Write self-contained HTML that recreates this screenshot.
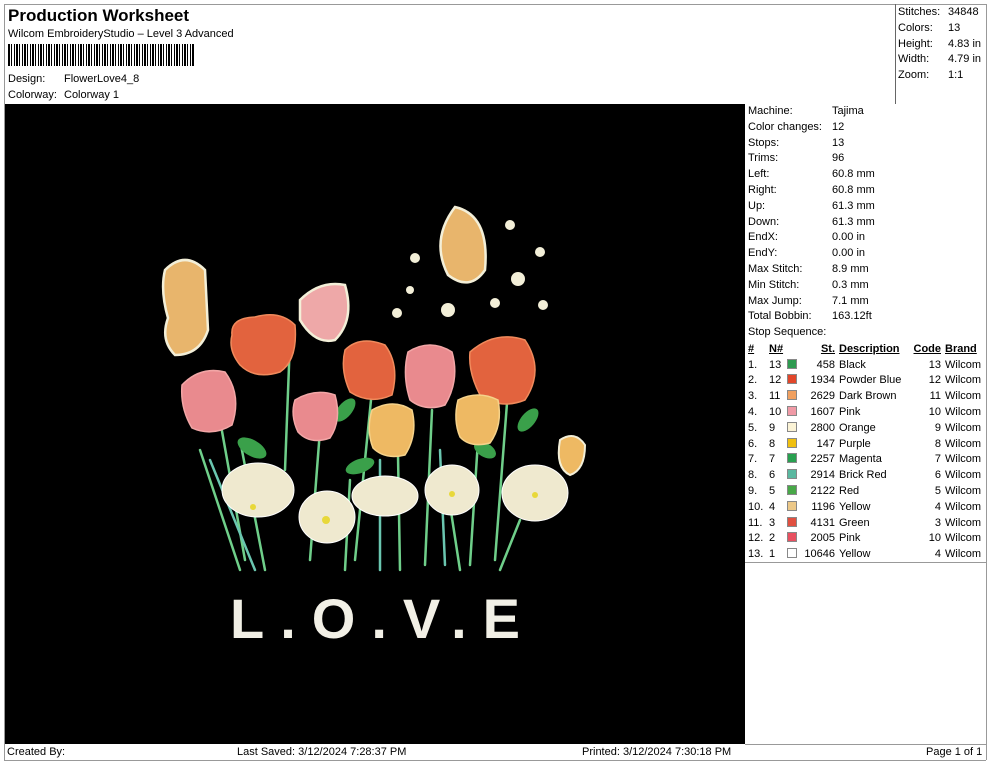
<!DOCTYPE html>
<html><head><meta charset="utf-8"><style>
*{margin:0;padding:0;box-sizing:border-box}
body{width:990px;height:762px;background:#fff;font-family:"Liberation Sans",Arial,sans-serif;color:#000;position:relative;overflow:hidden;font-size:11px}
.a{position:absolute;white-space:nowrap}
.line{position:absolute;background:#999}
table{border-collapse:collapse}
td{padding:0;height:15.8px;font-size:11px;white-space:nowrap}
.sw{display:inline-block;width:10px;height:10px;border:1px solid #888;vertical-align:-1px}
</style></head><body>
<div class="line" style="left:4px;top:4px;width:982px;height:1px"></div>
<div class="line" style="left:4px;top:4px;width:1px;height:756px"></div>
<div class="line" style="left:986px;top:4px;width:1px;height:756px"></div>
<div class="line" style="left:4px;top:760px;width:982px;height:1px"></div>
<div class="line" style="left:895px;top:4px;width:1px;height:100px;background:#666"></div>
<div class="line" style="left:745px;top:744px;width:241px;height:1px"></div>
<div class="line" style="left:745px;top:562px;width:241px;height:1px"></div>

<div class="a" style="left:8px;top:6px;font-size:17px;font-weight:bold">Production Worksheet</div>
<div class="a" style="left:8px;top:28px;font-size:11px">Wilcom EmbroideryStudio – Level 3 Advanced</div>
<div class="a" style="left:8px;top:44px;width:187px;height:22px;background:repeating-linear-gradient(90deg,#000 0 2px,#fff 2px 3px,#000 3px 4px,#fff 4px 6px,#000 6px 7px,#fff 7px 8px)"></div>
<div class="a" style="left:8px;top:73px">Design:</div><div class="a" style="left:64px;top:73px">FlowerLove4_8</div>
<div class="a" style="left:8px;top:89px">Colorway:</div><div class="a" style="left:64px;top:89px">Colorway 1</div>

<div class="a" style="left:898px;top:5px;line-height:15.8px">Stitches:<br>Colors:<br>Height:<br>Width:<br>Zoom:</div>
<div class="a" style="left:948px;top:5px;line-height:15.8px">34848<br>13<br>4.83 in<br>4.79 in<br>1:1</div>

<div class="a" style="left:5px;top:104px;width:740px;height:640px;background:#000">
<svg width="740" height="640" viewBox="5 104 740 640" style="position:absolute;left:0;top:0">
<g fill="none" stroke-width="2.5" stroke-linecap="round">
<path d="M220 420 L245 560 M240 440 L265 570 M200 450 L240 570 M290 340 L285 470 M320 430 L310 560 M372 390 L355 560 M398 455 L400 570 M432 410 L425 565 M478 440 L470 565 M508 390 L495 560 M350 480 L345 570 M450 505 L460 570 M520 520 L500 570" stroke="#6fcf8a"/>
<path d="M210 460 L255 570 M380 460 L380 570 M440 450 L445 565" stroke="#6ac6b0"/>
</g>
<g fill="#3aa04a">
<ellipse cx="252" cy="448" rx="16" ry="8" transform="rotate(30 252 448)"/>
<ellipse cx="345" cy="410" rx="14" ry="7" transform="rotate(-50 345 410)"/>
<ellipse cx="360" cy="466" rx="15" ry="7" transform="rotate(-20 360 466)"/>
<ellipse cx="528" cy="420" rx="14" ry="7" transform="rotate(-50 528 420)"/>
<ellipse cx="485" cy="450" rx="12" ry="7" transform="rotate(30 485 450)"/>
</g>
<g stroke="#f3efd8" stroke-width="2.5">
<path d="M165 270 Q185 250 205 270 L208 330 Q200 355 175 355 Q160 340 168 318 Q160 290 165 270Z" fill="#e8b56c"/>
<path d="M300 300 Q320 280 345 285 Q355 320 335 340 Q315 345 300 320Z" fill="#eea8a8"/>
<path d="M455 207 Q490 215 485 270 Q470 292 448 275 Q430 240 455 207Z" fill="#e8b56c"/>
</g>
<g fill="#f3efd8">
<circle cx="415" cy="258" r="5"/><circle cx="510" cy="225" r="5"/><circle cx="540" cy="252" r="5"/><circle cx="518" cy="279" r="7"/><circle cx="410" cy="290" r="4"/><circle cx="448" cy="310" r="7"/><circle cx="495" cy="303" r="5"/><circle cx="543" cy="305" r="5"/><circle cx="397" cy="313" r="5"/>
</g>
<g fill="#e2633e" stroke="#f08a5c" stroke-width="1.5">
<path d="M232 335 Q230 318 255 317 Q280 310 295 325 Q298 360 280 372 Q255 380 240 365 Q228 350 232 335Z"/>
<path d="M345 350 Q360 335 385 345 Q400 365 392 395 Q370 405 350 392 Q340 370 345 350Z"/>
<path d="M470 352 Q495 330 525 340 Q545 370 525 400 Q500 410 480 395 Q468 372 470 352Z"/>
</g>
<g fill="#e98a8e" stroke="#f2a6a6" stroke-width="1.5">
<path d="M182 385 Q200 366 225 372 Q242 395 232 425 Q212 437 192 428 Q180 408 182 385Z"/>
<path d="M295 400 Q315 388 335 395 Q342 420 330 438 Q310 445 298 432 Q290 415 295 400Z"/>
<path d="M408 352 Q430 338 452 352 Q460 380 445 405 Q425 412 410 400 Q402 375 408 352Z"/>
</g>
<g fill="#eeb963" stroke="#f5d28a" stroke-width="1.5">
<path d="M372 410 Q393 398 412 410 Q418 435 405 455 Q385 460 373 448 Q366 430 372 410Z"/>
<path d="M458 400 Q478 390 498 400 Q503 425 490 443 Q470 448 460 437 Q453 420 458 400Z"/>
</g>
<path d="M560 440 Q575 430 585 445 Q585 470 570 475 Q555 468 560 440Z" fill="#eeb963" stroke="#f3efd8" stroke-width="2"/>
<g fill="#efe9cf" stroke="#fff" stroke-width="1">
<ellipse cx="258" cy="490" rx="36" ry="27"/>
<ellipse cx="327" cy="517" rx="28" ry="26"/>
<ellipse cx="385" cy="496" rx="33" ry="20"/>
<ellipse cx="452" cy="490" rx="27" ry="25"/>
<ellipse cx="535" cy="493" rx="33" ry="28"/>
</g>
<g fill="#e8d83a"><circle cx="253" cy="507" r="3"/><circle cx="326" cy="520" r="4"/><circle cx="452" cy="494" r="3"/><circle cx="535" cy="495" r="3"/></g>
<text x="230" y="638" font-family="Liberation Sans" font-weight="bold" font-size="56" fill="#f2f0e6" letter-spacing="16">L.O.V.E</text>
</svg>
</div>

<div class="a" style="left:748px;top:104px;line-height:15.8px">Machine:<br>Color changes:<br>Stops:<br>Trims:<br>Left:<br>Right:<br>Up:<br>Down:<br>EndX:<br>EndY:<br>Max Stitch:<br>Min Stitch:<br>Max Jump:<br>Total Bobbin:<br>Stop Sequence:</div>
<div class="a" style="left:832px;top:104px;line-height:15.8px">Tajima<br>12<br>13<br>96<br>60.8 mm<br>60.8 mm<br>61.3 mm<br>61.3 mm<br>0.00 in<br>0.00 in<br>8.9 mm<br>0.3 mm<br>7.1 mm<br>163.12ft</div>

<table class="a" style="left:748px;top:341px">
<tr style="font-weight:bold;text-decoration:underline"><td style="width:21px">#</td><td style="width:18px">N#</td><td style="width:14px"></td><td style="width:34px;text-align:right">St.</td><td style="width:72px;padding-left:4px">Description</td><td style="width:34px;text-align:right">Code</td><td style="padding-left:4px">Brand</td></tr>
<tr><td>1.</td><td>13</td><td><span class="sw" style="background:#2e9a50"></span></td><td align="right">458</td><td style="padding-left:4px">Black</td><td align="right">13</td><td style="padding-left:4px">Wilcom</td></tr>
<tr><td>2.</td><td>12</td><td><span class="sw" style="background:#e2462a"></span></td><td align="right">1934</td><td style="padding-left:4px">Powder Blue</td><td align="right">12</td><td style="padding-left:4px">Wilcom</td></tr>
<tr><td>3.</td><td>11</td><td><span class="sw" style="background:#f0a060"></span></td><td align="right">2629</td><td style="padding-left:4px">Dark Brown</td><td align="right">11</td><td style="padding-left:4px">Wilcom</td></tr>
<tr><td>4.</td><td>10</td><td><span class="sw" style="background:#f09aa6"></span></td><td align="right">1607</td><td style="padding-left:4px">Pink</td><td align="right">10</td><td style="padding-left:4px">Wilcom</td></tr>
<tr><td>5.</td><td>9</td><td><span class="sw" style="background:#fbf3d6"></span></td><td align="right">2800</td><td style="padding-left:4px">Orange</td><td align="right">9</td><td style="padding-left:4px">Wilcom</td></tr>
<tr><td>6.</td><td>8</td><td><span class="sw" style="background:#f0c010"></span></td><td align="right">147</td><td style="padding-left:4px">Purple</td><td align="right">8</td><td style="padding-left:4px">Wilcom</td></tr>
<tr><td>7.</td><td>7</td><td><span class="sw" style="background:#28a050"></span></td><td align="right">2257</td><td style="padding-left:4px">Magenta</td><td align="right">7</td><td style="padding-left:4px">Wilcom</td></tr>
<tr><td>8.</td><td>6</td><td><span class="sw" style="background:#5ab8a0"></span></td><td align="right">2914</td><td style="padding-left:4px">Brick Red</td><td align="right">6</td><td style="padding-left:4px">Wilcom</td></tr>
<tr><td>9.</td><td>5</td><td><span class="sw" style="background:#48a848"></span></td><td align="right">2122</td><td style="padding-left:4px">Red</td><td align="right">5</td><td style="padding-left:4px">Wilcom</td></tr>
<tr><td>10.</td><td>4</td><td><span class="sw" style="background:#ecc888"></span></td><td align="right">1196</td><td style="padding-left:4px">Yellow</td><td align="right">4</td><td style="padding-left:4px">Wilcom</td></tr>
<tr><td>11.</td><td>3</td><td><span class="sw" style="background:#e05040"></span></td><td align="right">4131</td><td style="padding-left:4px">Green</td><td align="right">3</td><td style="padding-left:4px">Wilcom</td></tr>
<tr><td>12.</td><td>2</td><td><span class="sw" style="background:#e85060"></span></td><td align="right">2005</td><td style="padding-left:4px">Pink</td><td align="right">10</td><td style="padding-left:4px">Wilcom</td></tr>
<tr><td>13.</td><td>1</td><td><span class="sw" style="background:#fff"></span></td><td align="right">10646</td><td style="padding-left:4px">Yellow</td><td align="right">4</td><td style="padding-left:4px">Wilcom</td></tr>
</table>

<div class="a" style="left:7px;top:746px">Created By:</div>
<div class="a" style="left:237px;top:746px">Last Saved: 3/12/2024 7:28:37 PM</div>
<div class="a" style="left:582px;top:746px">Printed: 3/12/2024 7:30:18 PM</div>
<div class="a" style="left:926px;top:746px">Page 1 of 1</div>
</body></html>
